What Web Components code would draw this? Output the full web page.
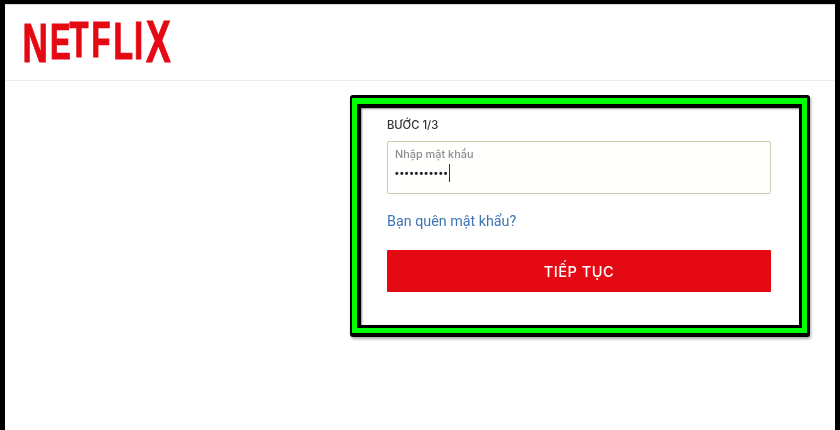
<!DOCTYPE html>
<html lang="vi"><head><meta charset="utf-8"><title>Netflix</title>
<style>html,body{margin:0;padding:0;background:#fff}</style></head>
<body>
<nf-page>
  <nf-header slot="header"></nf-header>
  <nf-frame>
    <nf-password-form step="BƯỚC 1/3" label="Nhập mật khẩu" link="Bạn quên mật khẩu?" action="TIẾP TỤC"></nf-password-form>
  </nf-frame>
</nf-page>
<script>
function def(name, html){
  customElements.define(name, class extends HTMLElement{
    connectedCallback(){
      if(this.shadowRoot) return;
      const r=this.attachShadow({mode:'open'});
      r.innerHTML=typeof html==='function'?html(this):html;
    }
  });
}
def('nf-page',`<style>
:host{display:block;box-sizing:border-box;width:840px;height:430px;overflow:hidden;background:#fff;
 border-top:4px solid #000;border-left:5px solid #000;border-right:5px solid #000;
 font-family:Roboto,"Liberation Sans",sans-serif}
.main{display:flex;padding:14px 0 0 345px}
</style><slot name="header"></slot><div class="main"><slot></slot></div>`);
def('nf-header',`<style>
:host{display:block;box-sizing:border-box;height:77px;border-top:1px solid #d8d8d8;border-bottom:1px solid #ececec;background:#fff}
svg{display:block;margin-left:18px;margin-top:15px;overflow:visible;filter:blur(.35px)}
text{font-family:"Liberation Sans Narrow","Liberation Sans",sans-serif;font-weight:700;fill:#e50914;stroke:#e50914;stroke-width:.7px}
</style>
<svg width="150" height="44" viewBox="0 0 150 44" role="img" aria-label="NETFLIX">
<g transform="scale(1,1.6)"><text><tspan x="-0.5" y="26.25" font-size="35">N</tspan><tspan x="27" y="24.4" font-size="31">E</tspan><tspan x="46.5" y="23.1" font-size="31">T</tspan><tspan x="68.5" y="23.1" font-size="31">F</tspan><tspan x="90.5" y="24.1" font-size="32">L</tspan><tspan x="111" y="24.4" font-size="33">I</tspan><tspan x="123" y="26.25" font-size="37">X</tspan></text></g>
</svg>`);
def('nf-frame',`<style>
:host{display:block;box-sizing:border-box;width:460px;height:242px;background:#00ff00;
 border-style:solid;border-color:#000;border-width:3px 3px 4px 2px;border-radius:3px;
 padding:6px 5px 5px 5px;box-shadow:1px 2px 3px rgba(0,0,0,.35)}
.in{box-sizing:border-box;height:100%;background:#fff;border:solid #000;border-width:4px 3px 3px 4px;box-shadow:inset 1px 1px 2px rgba(0,0,0,.45)}
</style><div class="in"><slot></slot></div>`);
def('nf-password-form',h=>`<style>
:host{display:flex;flex-direction:column;box-sizing:border-box;height:100%;padding:9.5px 28px 0 26px;color:#333;filter:blur(.35px)}
.step{font:500 11.2px/15px Inter,"Liberation Sans",sans-serif;color:#333}
.field{box-sizing:border-box;height:53px;margin-top:8.5px;border:1px solid #c3d0a8;border-radius:2px;padding:5px 7px 0;background:#fffffd}
.lab{font:500 10.9px/15px Inter,"Liberation Sans",sans-serif;color:#8c8c8c}
.val{display:flex;align-items:center;height:18px;margin-top:2px;font:700 10.5px/18px "Liberation Sans",sans-serif;color:#222;letter-spacing:1.2px}
.caret{width:1.5px;height:18px;background:#333;margin-left:0}
a{display:block;margin-top:17px;font-size:14.3px;line-height:20px;color:#3f75b5;text-decoration:none}
button{display:block;width:100%;height:42px;margin-top:19px;padding:2px 0 0;border:0;border-radius:1px;background:#e50914;color:#fff;font:500 14.6px Inter,sans-serif;letter-spacing:.5px}
</style>
<div class="step">${h.getAttribute('step')}</div>
<div class="field"><div class="lab">${h.getAttribute('label')}</div><div class="val">•••••••••••<span class="caret"></span></div></div>
<a href="#">${h.getAttribute('link')}</a>
<button>${h.getAttribute('action')}</button>`);
</script>
</body></html>
